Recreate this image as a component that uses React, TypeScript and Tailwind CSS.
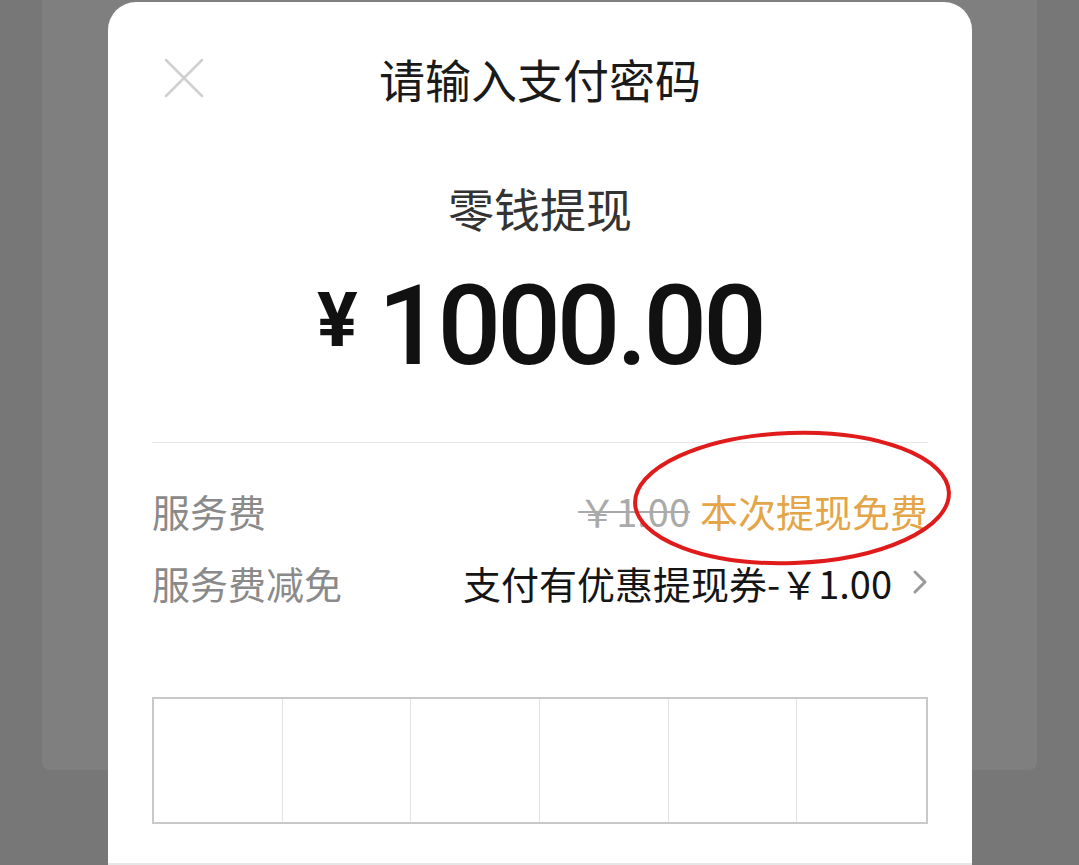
import React from 'react';

const cjk = { fontFamily: '"Noto Sans CJK SC", "Noto Sans", sans-serif' };
const num = { fontFamily: 'Roboto, "Liberation Sans", sans-serif' };

const CloseIcon = () => (
  <svg width="40" height="40" viewBox="0 0 40 40" fill="none">
    <path d="M2 2 L38 38 M38 2 L2 38" stroke="#cfcfcf" strokeWidth="2.5" strokeLinecap="round" />
  </svg>
);

const Chevron = () => (
  <svg width="16" height="26" viewBox="0 0 16 26" fill="none">
    <path d="M3 3 L13 13 L3 23" stroke="#9a9a9a" strokeWidth="3" strokeLinecap="round" strokeLinejoin="round" />
  </svg>
);

const PasswordBox = () => (
  <div className="grid grid-cols-6 h-[127px] border-2 border-[#c9c9c9]">
    {[0, 1, 2, 3, 4, 5].map((i) => (
      <div key={i} className={i < 5 ? 'border-r border-[#e3e3e3]' : ''} />
    ))}
  </div>
);

export default function App() {
  return (
    <div className="relative w-full h-[865px] overflow-hidden bg-[#777777]" style={cjk}>
      {/* page behind the overlay */}
      <div className="mx-[42px] h-[770px] bg-[#7f7f7f] rounded-b-[8px]" />

      {/* payment sheet */}
      <div className="absolute left-[108px] top-[2px] w-[864px] h-[863px] bg-white rounded-t-[28px] flex flex-col">
        <div className="relative h-[152px] flex items-center justify-center">
          <div className="absolute left-[56px] top-[56px]">
            <CloseIcon />
          </div>
          <div className="text-[46px] leading-[56px] text-[#1a1a1a]">请输入支付密码</div>
        </div>

        <div className="mt-[25px] text-center text-[46px] leading-[56px] text-[#333333]">零钱提现</div>

        <div className="mt-[35px] flex items-center justify-center h-[112px] text-[#111111]">
          <span className="text-[76px] font-bold leading-none mr-[20px] -mt-[12px]" style={num}>¥</span>
          <span className="text-[112px] font-medium leading-none tracking-[-4px]" style={num}>1000.00</span>
        </div>

        <div className="mx-[44px] mt-[60px] h-px bg-[#e6e6e6]" />

        <div className="mx-[44px] mt-[39px] h-[56px] flex items-center justify-between text-[38px]">
          <span className="text-[#8a8a8a]">服务费</span>
          <span className="flex items-center gap-[10px]">
            <span className="text-[#aaaaaa] line-through decoration-[2px]">￥1.00</span>
            <span className="text-[#e3a548]">本次提现免费</span>
          </span>
        </div>

        <div className="mx-[44px] mt-[16px] h-[56px] flex items-center justify-between text-[38px]">
          <span className="text-[#8a8a8a]">服务费减免</span>
          <span className="flex items-center gap-[20px]">
            <span className="text-[#151515]">支付有优惠提现券-￥1.00</span>
            <Chevron />
          </span>
        </div>

        <div className="mx-[44px] mt-[87px]">
          <PasswordBox />
        </div>

        <div className="mt-auto h-[2px] bg-[#e6e6e6]" />

        {/* red annotation ring */}
        <svg
          className="absolute left-[522px] top-[424px] pointer-events-none"
          width="324"
          height="144"
          viewBox="0 0 324 144"
          fill="none"
        >
          <ellipse cx="162" cy="72" rx="157" ry="65" stroke="#e01b1b" strokeWidth="4" transform="rotate(-2 162 72)" />
        </svg>
      </div>
    </div>
  );
}
